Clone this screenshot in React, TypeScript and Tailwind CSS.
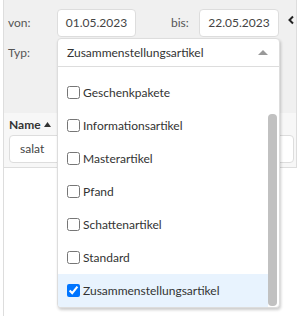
import React from "react";

const items = [
  { label: "Geschenkpakete", checked: false },
  { label: "Informationsartikel", checked: false },
  { label: "Masterartikel", checked: false },
  { label: "Pfand", checked: false },
  { label: "Schattenartikel", checked: false },
  { label: "Standard", checked: false },
  { label: "Zusammenstellungsartikel", checked: true },
];

export default function App() {
  return (
    <div className="relative w-[304px] h-[316px] bg-white text-[12px] text-[#333] font-['Lato',sans-serif] overflow-hidden">
      <div className="ml-[3px] w-[294px] h-[316px] border-l border-[#dddddd] flex flex-col">
        {/* filter panel */}
        <div className="h-[113px] bg-[#f0f0f0] border-r border-[#dddddd] flex flex-col pl-[4px] pt-[9px]">
          <div className="flex items-start h-[29px]">
            <div className="w-[49px] h-[28px] flex items-center text-[#555]">von:</div>
            <div className="w-[79px] h-[28px] bg-white border border-[#dddddd] rounded-[4px] flex items-center justify-center text-[#444]">01.05.2023</div>
            <div className="w-[63px] h-[28px] flex items-center pl-[35px] text-[#555]">bis:</div>
            <div className="w-[80px] h-[28px] bg-white border border-[#dddddd] rounded-[4px] flex items-center justify-center text-[#444]">22.05.2023</div>
            <div className="ml-[8px] mt-[6px]">
              <svg width="8" height="10" viewBox="0 0 8 10">
                <path d="M6 1.5 L2.5 5 L6 8.5" stroke="#222" strokeWidth="2" fill="none" />
              </svg>
            </div>
          </div>
          <div className="flex items-center h-[30px]">
            <div className="w-[49px] text-[#555]">Typ:</div>
          </div>
        </div>
        {/* table header */}
        <div className="h-[55px] bg-[#f7f7f7] border-r border-b border-[#dddddd] flex flex-col pl-[5px] pr-[2px]">
          <div className="h-[21px] flex items-end font-bold text-[#333] gap-[3px]">
            <span>Name</span>
            <svg width="7" height="5" viewBox="0 0 7 5" className="mb-[7px]">
              <path d="M0 5 L3.5 0 L7 5 Z" fill="#333" />
            </svg>
          </div>
          <div className="mt-[1px] h-[28px] bg-white border border-[#dddddd] rounded-[4px] flex items-center pl-[10px] text-[#444]">salat</div>
        </div>
        <div className="flex-1 bg-white" />
      </div>

      {/* dropdown overlay */}
      <div className="absolute left-[57px] top-[38px] w-[223px] h-[270px] bg-white border border-[#dddddd] rounded-[4px] shadow-[1px_2px_3px_rgba(0,0,0,0.2)] flex flex-col overflow-hidden">
        <div className="h-[28px] shrink-0 border-b border-[#dddddd] flex items-center pl-[9px] pr-[11px] justify-between">
          <span className="text-[#333]">Zusammenstellungsartikel</span>
          <svg width="10" height="5" viewBox="0 0 10 5">
            <path d="M0 5 L5 0 L10 5 Z" fill="#999" />
          </svg>
        </div>
        <div className="flex flex-1">
          <div className="flex-1 flex flex-col pt-[9px]">
            {items.map((it) => (
              <div
                key={it.label}
                className={
                  "h-[33px] flex items-center pl-[9px] gap-[3px] " +
                  (it.checked ? "bg-[#e8f3fe]" : "")
                }
              >
                <input
                  type="checkbox"
                  readOnly
                  checked={it.checked}
                  className="m-0 w-[13px] h-[13px]"
                />
                <span className="text-[#333]">{it.label}</span>
              </div>
            ))}
          </div>
          <div className="w-[11px] flex justify-start">
            <div className="mt-[47px] w-[9px] h-[192px] bg-[#c1c1c1] rounded-[4px]" />
          </div>
        </div>
      </div>
    </div>
  );
}
